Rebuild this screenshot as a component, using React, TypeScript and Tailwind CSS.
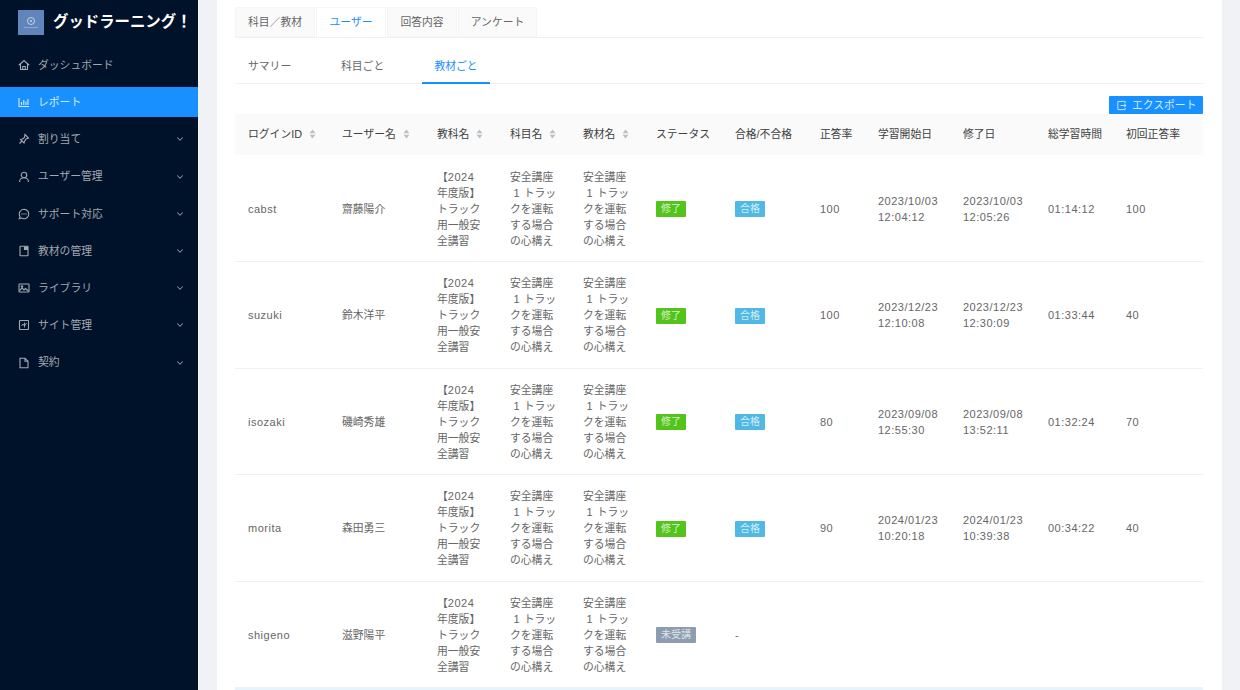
import type { ReactNode } from 'react';
import { ChevronDown } from 'lucide-react';

const stroke = { fill: 'none', stroke: 'currentColor', strokeWidth: 2.2 };

function HomeIcon({ className }: { className?: string }) {
  return (
    <svg viewBox="0 0 24 24" {...stroke} className={className}>
      <path d="M1.5 12.5 12 3l10.5 9.5" />
      <path d="M5 10v11h14V10" />
      <path d="M9.5 21v-6h5v6" />
    </svg>
  );
}

function ChartIcon({ className }: { className?: string }) {
  return (
    <svg viewBox="0 0 24 24" {...stroke} className={className}>
      <path d="M2 4v17h20" />
      <path d="M7 18v-6M11.5 18V8M16 18v-7M20 18V6" />
    </svg>
  );
}

function PinIcon({ className }: { className?: string }) {
  return (
    <svg viewBox="0 0 24 24" {...stroke} className={className}>
      <path d="M14 3l7 7-5 2-3 5-1 3-7-7 4-1 4-3z" />
      <path d="M7.5 16.5 3 21" />
    </svg>
  );
}

function UserIcon({ className }: { className?: string }) {
  return (
    <svg viewBox="0 0 24 24" {...stroke} className={className}>
      <circle cx="12" cy="8" r="5.5" />
      <path d="M3 22c0-5 4-8.5 9-8.5s9 3.5 9 8.5" />
    </svg>
  );
}

function CommentIcon({ className }: { className?: string }) {
  return (
    <svg viewBox="0 0 24 24" {...stroke} className={className}>
      <path d="M12 2.5a9.5 9.5 0 1 1-5 17.6L2.5 21.5 4 17A9.5 9.5 0 0 1 12 2.5z" />
      <path d="M8 12h.01M12 12h.01M16 12h.01" strokeWidth="2.6" strokeLinecap="round" />
    </svg>
  );
}

function BookIcon({ className }: { className?: string }) {
  return (
    <svg viewBox="0 0 24 24" {...stroke} className={className}>
      <rect x="4" y="2.5" width="16" height="19" rx="1" />
      <path d="M13 3v6h6V3" fill="currentColor" />
    </svg>
  );
}

function PictureIcon({ className }: { className?: string }) {
  return (
    <svg viewBox="0 0 24 24" {...stroke} className={className}>
      <rect x="2" y="4" width="20" height="16" rx="1" />
      <path d="M3 17l5-5 4 4 3-3 6 5" />
      <circle cx="8" cy="9" r="1.5" />
    </svg>
  );
}

function FundIcon({ className }: { className?: string }) {
  return (
    <svg viewBox="0 0 24 24" {...stroke} className={className}>
      <rect x="3" y="3" width="18" height="18" rx="1" />
      <path d="M7 14l3-4 3 4 4-6M13 7v10" strokeWidth="1.8" />
    </svg>
  );
}

function FileIcon({ className }: { className?: string }) {
  return (
    <svg viewBox="0 0 24 24" {...stroke} className={className}>
      <path d="M4 2.5h10l6 6v13H4z" />
      <path d="M14 2.5v6h6" />
    </svg>
  );
}

const navItems = [
  { label: 'ダッシュボード', icon: HomeIcon },
  { label: 'レポート', icon: ChartIcon, active: true },
  { label: '割り当て', icon: PinIcon, sub: true },
  { label: 'ユーザー管理', icon: UserIcon, sub: true },
  { label: 'サポート対応', icon: CommentIcon, sub: true },
  { label: '教材の管理', icon: BookIcon, sub: true },
  { label: 'ライブラリ', icon: PictureIcon, sub: true },
  { label: 'サイト管理', icon: FundIcon, sub: true },
  { label: '契約', icon: FileIcon, sub: true },
];

const columns = [
  { label: 'ログインID', sort: true, width: 94 },
  { label: 'ユーザー名', sort: true, width: 95 },
  { label: '教科名', sort: true, width: 73 },
  { label: '科目名', sort: true, width: 73 },
  { label: '教材名', sort: true, width: 73 },
  { label: 'ステータス', width: 79 },
  { label: '合格/不合格', width: 85 },
  { label: '正答率', width: 58 },
  { label: '学習開始日', width: 85 },
  { label: '修了日', width: 85 },
  { label: '総学習時間', width: 78 },
  { label: '初回正答率', width: 90 },
];

const rows = [
  { id: 'cabst', name: '齋藤陽介', rate: '100', start: ['2023/10/03', '12:04:12'], end: ['2023/10/03', '12:05:26'], time: '01:14:12', first: '100' },
  { id: 'suzuki', name: '鈴木洋平', rate: '100', start: ['2023/12/23', '12:10:08'], end: ['2023/12/23', '12:30:09'], time: '01:33:44', first: '40' },
  { id: 'isozaki', name: '磯崎秀雄', rate: '80', start: ['2023/09/08', '12:55:30'], end: ['2023/09/08', '13:52:11'], time: '01:32:24', first: '70' },
  { id: 'morita', name: '森田勇三', rate: '90', start: ['2024/01/23', '10:20:18'], end: ['2024/01/23', '10:39:38'], time: '00:34:22', first: '40' },
  { id: 'shigeno', name: '滋野陽平', notStarted: true },
];

// Latin text sits wider than the kana around it in the original
function Latin({ children }: { children: ReactNode }) {
  return <span className="text-[11px] tracking-[0.5px]">{children}</span>;
}

function SortCaret() {
  return (
    <svg viewBox="0 0 8 12" className="ml-[7px] inline-block h-[10px] w-[7px] fill-[#bfbfbf] align-[-1px]">
      <path d="M4 0.5 7.5 5H0.5z" />
      <path d="M4 11.5 0.5 7h7z" />
    </svg>
  );
}

function CourseName() {
  return (
    <>
      <div className="whitespace-nowrap">【<Latin>2024</Latin></div>
      <div className="whitespace-nowrap">年度版】</div>
      <div className="whitespace-nowrap">トラック</div>
      <div className="whitespace-nowrap">用一般安</div>
      <div className="whitespace-nowrap">全講習</div>
    </>
  );
}

function LessonName() {
  return (
    <>
      <div className="whitespace-nowrap">安全講座</div>
      <div className="whitespace-nowrap"><Latin>&nbsp;1 </Latin>トラッ</div>
      <div className="whitespace-nowrap">クを運転</div>
      <div className="whitespace-nowrap">する場合</div>
      <div className="whitespace-nowrap">の心構え</div>
    </>
  );
}

function Lines({ lines }: { lines: string[] }) {
  return (
    <>
      {lines.map((line) => (
        <div key={line} className="whitespace-nowrap"><Latin>{line}</Latin></div>
      ))}
    </>
  );
}

function Tag({ color, children }: { color: string; children: string }) {
  return <span className={`inline-block rounded-[1px] px-[5px] text-[10px] leading-[16px] text-white/75 ${color}`}>{children}</span>;
}

export default function App() {
  return (
    <div className="flex h-[690px] w-[1240px] overflow-hidden bg-[#f0f2f5] font-['Liberation_Sans','Noto_Sans_CJK_JP',sans-serif] text-[10.8px] text-[#666666]">
      <aside className="w-[198px] shrink-0 bg-[#001229]">
        <div className="flex h-[50px] items-start pl-[18px] pt-[10px]">
          <div className="flex h-[25px] w-[26px] flex-col items-center justify-center bg-[#5f85bb]">
            <div className="flex h-[8px] w-[8px] items-center justify-center rounded-full border border-[#c6d4e8]">
              <div className="h-[2px] w-[2px] rounded-full bg-[#c6d4e8]" />
            </div>
            <div className="mt-[2px] h-px w-[14px] bg-[#8fa9cf]" />
          </div>
          <span className="ml-[9px] mt-[2px] text-[15.4px] font-bold leading-[20px] text-white">グッドラーニング！</span>
        </div>
        <nav className="flex flex-col gap-[7.2px]">
          {navItems.map((item) => {
            const Icon = item.icon;
            return (
              <div
                key={item.label}
                className={`flex h-[30px] items-center pl-[18px] pr-[13px] ${item.active ? 'bg-[#1890ff] text-[#d6ebff]' : 'text-[#a3a9b2]'}`}
              >
                <Icon className="h-[12px] w-[12px]" />
                <span className="ml-[8px] flex-1">{item.label}</span>
                {item.sub && <ChevronDown className="h-[10px] w-[10px] text-[#8c93a0]" strokeWidth={2.5} />}
              </div>
            );
          })}
        </nav>
      </aside>

      <main className="ml-[19px] mr-[18px] flex w-[1005px] flex-col bg-white pl-[18px] pr-[19px] pt-[7px]">
        <div className="flex h-[31px] gap-[1px] border-b border-[#f0f0f0]">
          <div className="flex w-[80px] items-center justify-center border border-[#f5f5f5] bg-[#fafafa]">科目／教材</div>
          <div className="flex w-[70px] items-center justify-center border border-b-0 border-[#f5f5f5] bg-white text-[#1890ff]">ユーザー</div>
          <div className="flex w-[70px] items-center justify-center border border-[#f5f5f5] bg-[#fafafa]">回答内容</div>
          <div className="flex w-[79px] items-center justify-center border border-[#f5f5f5] bg-[#fafafa]">アンケート</div>
        </div>

        <div className="mt-[12px] flex h-[34px] border-b border-[#f0f0f0]">
          <div className="flex w-[106px] items-center pl-[13px]">サマリー</div>
          <div className="flex w-[81px] items-center">科目ごと</div>
          <div className="-mb-px flex w-[68px] items-center justify-center border-b-2 border-[#1890ff] pt-[1px] text-[#1890ff]">教材ごと</div>
        </div>

        <div className="mt-[12px] flex justify-end">
          <div className="flex h-[18px] w-[94px] items-center rounded-[1px] bg-[#1890ff] pl-[7px] text-[#d6ebff]">
            <svg viewBox="0 0 24 24" fill="none" stroke="currentColor" strokeWidth="2" className="h-[11px] w-[11px]">
              <path d="M20 7V3H4v18h16v-4" />
              <path d="M10 12h12M18 9l4 3-4 3" />
            </svg>
            <span className="ml-[5px]">エクスポート</span>
          </div>
        </div>

        <table className="table-fixed border-collapse text-left">
          <colgroup>
            {columns.map((col) => (
              <col key={col.label} style={{ width: col.width }} />
            ))}
          </colgroup>
          <thead>
            <tr className="h-[41px] bg-[#fafafa]">
              {columns.map((col) => (
                <th key={col.label} className="whitespace-nowrap pl-[13px] font-normal text-[#404040]">
                  {col.label}
                  {col.sort && <SortCaret />}
                </th>
              ))}
            </tr>
          </thead>
          <tbody>
            {rows.map((row) => (
              <tr key={row.id} className="h-[106.5px] border-b border-[#f0f0f0] leading-[16px]">
                <td className="pl-[13px] pt-[1px]"><Latin>{row.id}</Latin></td>
                <td className="pl-[13px] pt-[1px]">{row.name}</td>
                <td className="pl-[13px] pt-[1px]"><CourseName /></td>
                <td className="pl-[13px] pt-[1px]"><LessonName /></td>
                <td className="pl-[13px] pt-[1px]"><LessonName /></td>
                <td className="pl-[13px] pt-[1px]">
                  {row.notStarted ? <Tag color="bg-[#8c9db0]">未受講</Tag> : <Tag color="bg-[#52c41a]">修了</Tag>}
                </td>
                <td className="pl-[13px] pt-[1px]">
                  {row.notStarted ? '-' : <Tag color="bg-[#4fb9e3]">合格</Tag>}
                </td>
                <td className="pl-[13px] pt-[1px]"><Latin>{row.rate}</Latin></td>
                <td className="pl-[13px] pt-[1px]">{row.start && <Lines lines={row.start} />}</td>
                <td className="pl-[13px] pt-[1px]">{row.end && <Lines lines={row.end} />}</td>
                <td className="pl-[13px] pt-[1px]"><Latin>{row.time}</Latin></td>
                <td className="pl-[13px] pt-[1px]"><Latin>{row.first}</Latin></td>
              </tr>
            ))}
          </tbody>
        </table>
        <div className="h-[2px] bg-[#e6f4fd]" />
      </main>
    </div>
  );
}
